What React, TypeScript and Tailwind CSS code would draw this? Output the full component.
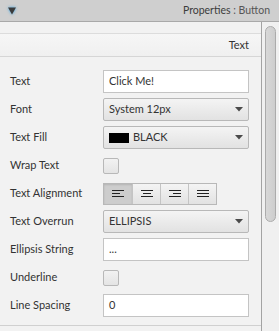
import React from 'react';

const font = "font-['Lato','Liberation_Sans',sans-serif]";

const Arrow = () => (
  <svg width="8" height="5" viewBox="0 0 8 5" className="shrink-0">
    <path d="M0 0h8L4 4.5z" fill="#4a4a4a" />
  </svg>
);

const TextInput = ({ value }: { value: string }) => (
  <div className="h-[23px] w-[146px] bg-white border border-[#c4c4c4] flex items-center pl-[5px] text-[11px] text-[#333]">
    {value}
  </div>
);

const Combo = ({ children }: { children: React.ReactNode }) => (
  <div className="h-[23px] w-[146px] rounded-[2px] border border-[#b8b8b8] bg-gradient-to-b from-[#f4f4f4] to-[#e2e2e2] flex items-center justify-between pl-[5px] pr-[5px] text-[11px] text-[#333]">
    <div className="flex items-center">{children}</div>
    <Arrow />
  </div>
);

const Check = () => (
  <div className="h-[16px] w-[16px] rounded-[2px] border border-[#b8b8b8] bg-gradient-to-b from-[#f2f2f2] to-[#e4e4e4]" />
);

function AlignIcon({ kind }: { kind: 'left' | 'center' | 'right' | 'justify' }) {
  const mid =
    kind === 'left' ? 'M2 4.5h8' : kind === 'center' ? 'M4 4.5h8' : kind === 'right' ? 'M6 4.5h8' : 'M2 4.5h12';
  return (
    <svg width="16" height="9" viewBox="0 0 16 9">
      <path d={`M2 1.5h12 ${mid} M2 7.5h12`} stroke="#222" strokeWidth="1" />
    </svg>
  );
}

const Row = ({ label, children }: { label: string; children: React.ReactNode }) => (
  <div className="flex items-center h-[23px]">
    <div className="w-[103px] shrink-0 pl-[10px] text-[11px] text-[#333]">{label}</div>
    {children}
  </div>
);

export default function App() {
  const aligns: ('left' | 'center' | 'right' | 'justify')[] = ['left', 'center', 'right', 'justify'];
  return (
    <div className={`w-[279px] h-[331px] bg-[#f2f2f2] flex flex-col overflow-hidden ${font}`}>
      <div className="h-[22px] shrink-0 bg-[#cfcfcf] border-b border-[#a9a9a9] flex items-center justify-between pl-[8px] pr-[9px]">
        <svg width="8" height="8" viewBox="0 0 8 8" className="drop-shadow-[0_0_1.5px_#3aa6e8]">
          <path d="M0 0.5h8L4 7.5z" fill="#3b3b3b" />
        </svg>
        <div className="text-[10.5px] text-[#555]">
          <span className="text-[#3c3c3c]">Properties</span> : Button
        </div>
      </div>
      <div className="flex flex-1 min-h-0">
        <div className="w-[261px] shrink-0 flex flex-col">
          <div className="h-[12px] border-b border-[#dcdcdc]" />
          <div className="h-[23px] border-b border-[#d6d6d6] bg-gradient-to-b from-[#f6f6f6] to-[#f0f0f0] flex items-center justify-end pr-[12px] text-[11px] text-[#333]">
            Text
          </div>
          <div className="flex flex-col gap-[5px] pt-[13px] pb-[8px] border-b border-[#d0d0d0]">
            <Row label="Text"><TextInput value="Click Me!" /></Row>
            <Row label="Font"><Combo>System 12px</Combo></Row>
            <Row label="Text Fill">
              <Combo>
                <span className="inline-block w-[20px] h-[10px] bg-black mr-[4px]" />
                BLACK
              </Combo>
            </Row>
            <Row label="Wrap Text"><Check /></Row>
            <Row label="Text Alignment">
              <div className="flex h-[22px] border border-[#b8b8b8]">
                {aligns.map((a, i) => (
                  <div
                    key={a}
                    className={`w-[28px] flex items-center justify-center ${i > 0 ? 'border-l border-[#c4c4c4]' : ''} ${
                      i === 0
                        ? 'bg-[#cdcdcd] shadow-[inset_0_1px_2px_rgba(0,0,0,0.12)]'
                        : 'bg-gradient-to-b from-[#f4f4f4] to-[#e2e2e2]'
                    }`}
                  >
                    <AlignIcon kind={a} />
                  </div>
                ))}
              </div>
            </Row>
            <Row label="Text Overrun"><Combo>ELLIPSIS</Combo></Row>
            <Row label="Ellipsis String"><TextInput value="..." /></Row>
            <Row label="Underline"><Check /></Row>
            <Row label="Line Spacing"><TextInput value="0" /></Row>
          </div>
        </div>
        <div className="flex-1 border-l border-[#a3a3a3] bg-[#f0f0f0] pt-[4px] pl-[3px]">
          <div className="w-[11px] h-[196px] rounded-full border border-[#ababab] bg-gradient-to-r from-[#d8d8d8] to-[#cdcdcd]" />
        </div>
      </div>
    </div>
  );
}
